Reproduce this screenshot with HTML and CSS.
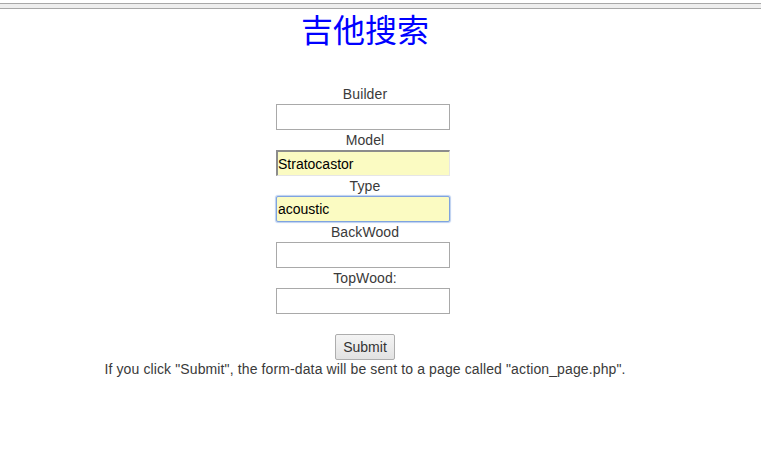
FILE: index.html
```html
<!DOCTYPE html>
<html>
<head>
<meta charset="utf-8">
<link rel="stylesheet" href="styles.css">
</head>
<body>
<div class="topbar"></div>
<div class="page">
  <h1 class="title">吉他搜索</h1>
  <form class="form">
    <label class="label">Builder</label>
    <input class="field" type="text">
    <label class="label">Model</label>
    <input class="field field-filled field-inset" type="text" value="Stratocastor">
    <label class="label">Type</label>
    <input class="field field-filled field-focus" type="text" value="acoustic">
    <label class="label">BackWood</label>
    <input class="field" type="text">
    <label class="label">TopWood:</label>
    <input class="field" type="text">
    <button class="submit" type="button">Submit</button>
  </form>
  <p class="note">If you click "Submit", the form-data will be sent to a page called "action_page.php".</p>
</div>
</body>
</html>
```

FILE: styles.css
```css
html, body {
  margin: 0;
  padding: 0;
  background: #ffffff;
}
body {
  font-family: "Liberation Sans", Arial, sans-serif;
  font-size: 14px;
  color: #3a3a3a;
}
.topbar {
  margin-top: 3px;
  height: 4px;
  border-top: 1px solid #a8a8a8;
  border-bottom: 1px solid #a8a8a8;
  background: #eeeeee;
}
.page {
  width: 730px;
  text-align: center;
}
.title {
  margin: 1px 0 0 0;
  font-family: "Noto Sans CJK SC", "Noto Sans", sans-serif;
  font-weight: normal;
  font-size: 32px;
  line-height: 36px;
  color: #0000ff;
}
.form {
  margin-top: 38px;
  display: flex;
  flex-direction: column;
  align-items: center;
}
.label {
  display: block;
  height: 20px;
  line-height: 20px;
  font-size: 14px;
  letter-spacing: 0.1px;
}
.field {
  display: block;
  box-sizing: border-box;
  width: 174px;
  height: 26px;
  margin: 0 4px 0 0;
  padding: 0 1px;
  border: 1px solid #a9a9a9;
  background: #ffffff;
  font-family: "Liberation Sans", Arial, sans-serif;
  font-size: 14px;
  color: #000000;
  outline: none;
}
.field-filled {
  background: #fbfbc2;
}
.field-inset {
  border-top: 2px solid #8c8c8c;
  border-left: 2px solid #8c8c8c;
  border-right: 1px solid #e6e6e6;
  border-bottom: 1px solid #e6e6e6;
  padding-left: 0;
}
.field-focus {
  border: 1px solid #7fa3e0;
  border-radius: 2px;
  box-shadow: 0 0 1px 1px #bcd0f0;
}
.submit {
  margin-top: 20px;
  box-sizing: border-box;
  width: 60px;
  height: 26px;
  padding: 0;
  border: 1px solid #adadad;
  border-radius: 2px;
  background: linear-gradient(#f4f4f4, #e2e2e2);
  font-family: "Liberation Sans", Arial, sans-serif;
  font-size: 14px;
  color: #333333;
}
.note {
  margin: 0;
  height: 18px;
  line-height: 18px;
  font-size: 14px;
  letter-spacing: 0.12px;
}
```
